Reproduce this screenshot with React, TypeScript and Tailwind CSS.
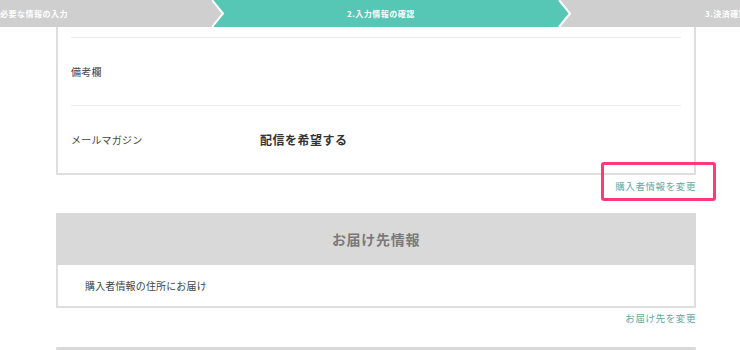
const jp = { fontFamily: '"Noto Sans CJK JP", "Noto Sans", sans-serif' };

function StepBar() {
  return (
    <div className="flex h-[27px] w-full overflow-hidden bg-[#cfcfcf] text-white font-bold" style={jp}>
      <div className="flex w-[212px] shrink-0 items-center justify-end overflow-hidden whitespace-nowrap pr-[144px] text-[8px] tracking-[0.5px]">
        1.必要な情報の入力
      </div>
      <div className="relative flex w-[360px] shrink-0 items-center pl-[135px] text-[8px] tracking-[0.5px]">
        <svg className="absolute inset-0" width="360" height="27" viewBox="0 0 360 27">
          <polygon points="0,0 347,0 358,13.5 347,27 0,27 11,13.5" fill="#56c7b4" />
          <polyline points="0,0 11,13.5 0,27" fill="none" stroke="#ffffff" strokeWidth="2" />
          <polyline points="347,0 358,13.5 347,27" fill="none" stroke="#ffffff" strokeWidth="2" />
        </svg>
        <span className="relative whitespace-nowrap">2.入力情報の確認</span>
      </div>
      <div className="flex flex-1 items-center overflow-hidden whitespace-nowrap pl-[133px] text-[8px] tracking-[0.5px]">
        3.決済確認
      </div>
    </div>
  );
}

function InfoRow({ label, value }: { label: string; value?: string }) {
  return (
    <div className="flex h-[67px] items-center text-[#444]">
      <div className="w-[189px] shrink-0 text-[10px] tracking-[0.2px]">{label}</div>
      {value && <div className="text-[12px] font-bold tracking-[0.5px] text-[#333]">{value}</div>}
    </div>
  );
}

function ChangeLink({ text, gap }: { text: string; gap: string }) {
  return <div className={`text-right text-[9.5px] leading-[14px] tracking-[0.6px] text-[#5fa79c] ${gap}`}>{text}</div>;
}

export default function App() {
  return (
    <div className="h-[350px] w-[740px] overflow-hidden bg-white" style={jp}>
      <StepBar />
      <div className="ml-[56px] w-[640px]">
        {/* purchaser info card (continues from above) */}
        <div className="flex flex-col border-x-2 border-b-2 border-[#dedede] px-[13px] pt-[10px]">
          <div className="h-px bg-[#ececec]" />
          <InfoRow label="備考欄" />
          <div className="h-px bg-[#ececec]" />
          <InfoRow label="メールマガジン" value="配信を希望する" />
        </div>

        <div className="relative h-[38px]">
          <ChangeLink text="購入者情報を変更" gap="pt-[4px]" />
          <div className="absolute top-[-13px] right-[-20px] h-[39px] w-[115px] rounded-[3px] border-[3px] border-[#ff3a78]" />
        </div>

        {/* delivery card */}
        <div className="border-x-2 border-b-2 border-[#dedede]">
          <div className="-mx-[2px] flex h-[52px] items-center justify-center bg-[#d9d9d9] text-[14px] font-bold tracking-[0.7px] text-[#7a7a7a]">
            お届け先情報
          </div>
          <div className="flex h-[41px] items-center bg-white pl-[27px] text-[10px] tracking-[0.15px] text-[#444]">
            購入者情報の住所にお届け
          </div>
        </div>

        <div className="h-[39px]">
          <ChangeLink text="お届け先を変更" gap="pt-[3px]" />
        </div>

        <div className="h-[52px] border-x-2 border-[#dedede] bg-[#d9d9d9]" />
      </div>
    </div>
  );
}
